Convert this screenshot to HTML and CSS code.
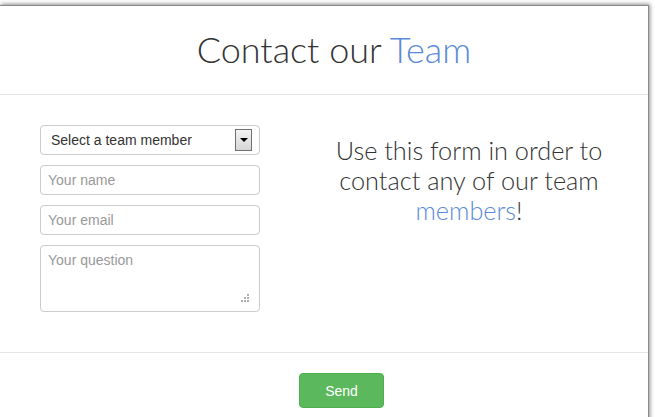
FILE: index.html
```html
<!DOCTYPE html>
<html>
<head>
<meta charset="utf-8">
<link rel="stylesheet" href="styles.css">
</head>
<body>
<div class="window">
  <div class="header">
    <h1 class="title">Contact our <span class="accent">Team</span></h1>
  </div>
  <div class="body">
    <form class="form">
      <div class="select">
        <span class="select-text">Select a team member</span>
        <span class="select-btn"><span class="tri"></span></span>
      </div>
      <input class="field" type="text" placeholder="Your name">
      <input class="field" type="text" placeholder="Your email">
      <div class="area-wrap">
        <textarea class="area" placeholder="Your question"></textarea>
        <svg class="grip" width="9" height="9" viewBox="0 0 9 9">
          <rect x="6" y="0" width="2" height="2" fill="#b0b0b0"/>
          <rect x="3" y="3" width="2" height="2" fill="#b0b0b0"/>
          <rect x="6" y="3" width="2" height="2" fill="#b0b0b0"/>
          <rect x="0" y="6" width="2" height="2" fill="#b0b0b0"/>
          <rect x="3" y="6" width="2" height="2" fill="#b0b0b0"/>
          <rect x="6" y="6" width="2" height="2" fill="#b0b0b0"/>
        </svg>
      </div>
    </form>
    <p class="intro">Use this form in order to contact any of our team <span class="accent">members</span>!</p>
  </div>
  <div class="footer">
    <button class="send" type="button">Send</button>
  </div>
</div>
</body>
</html>
```
FILE: styles.css
```css
html, body {
  margin: 0;
  padding: 0;
  background: #ffffff;
  height: 100%;
  overflow: hidden;
}
body {
  padding-top: 5px;
  box-sizing: border-box;
}
.window {
  width: 648px;
  height: 420px;
  background: #ffffff;
  border-top: 1px solid #8a8a8a;
  border-right: 1px solid #8a8a8a;
  box-shadow: 1px -1px 4px rgba(0, 0, 0, 0.45);
}
.header {
  padding: 23px 0 25px 20px;
  border-bottom: 1px solid #e5e5e5;
  text-align: center;
}
.title {
  margin: 0;
  font-family: Lato, "Liberation Sans", sans-serif;
  font-weight: 300;
  font-size: 36px;
  line-height: 40px;
  color: #333333;
}
.accent {
  color: #5b8ad8;
}
.body {
  display: flex;
  padding: 30px 0 40px 40px;
  border-bottom: 1px solid #e5e5e5;
}
.form {
  width: 220px;
  display: flex;
  flex-direction: column;
  gap: 10px;
  margin: 0;
}
.select {
  height: 30px;
  box-sizing: border-box;
  border: 1px solid #cccccc;
  border-radius: 4px;
  display: flex;
  align-items: center;
  justify-content: space-between;
  padding: 0 7px 0 10px;
  font-family: "Liberation Sans", Arial, sans-serif;
  font-size: 14px;
  color: #333333;
}
.select-btn {
  width: 15px;
  height: 20px;
  border: 1px solid #707070;
  background: linear-gradient(#f4f4f4, #d6d6d6);
  display: flex;
  align-items: center;
  justify-content: center;
}
.tri {
  width: 0;
  height: 0;
  border-left: 4px solid transparent;
  border-right: 4px solid transparent;
  border-top: 4px solid #000000;
}
.field, .area {
  display: block;
  width: 220px;
  box-sizing: border-box;
  border: 1px solid #cccccc;
  border-radius: 4px;
  font-family: "Liberation Sans", Arial, sans-serif;
  font-size: 14px;
  color: #333333;
  margin: 0;
  outline: none;
}
.field {
  height: 30px;
  padding: 0 7px;
}
.field::placeholder, .area::placeholder {
  color: #999999;
  opacity: 1;
}
.area-wrap {
  position: relative;
  height: 67px;
}
.area {
  height: 67px;
  padding: 6px 7px;
  resize: none;
}
.grip {
  position: absolute;
  right: 10px;
  bottom: 9px;
}
.intro {
  flex: 1;
  margin: 10px 0 0 30px;
  font-family: Lato, "Liberation Sans", sans-serif;
  font-weight: 300;
  font-size: 25.3px;
  line-height: 30px;
  color: #333333;
  text-align: center;
  padding: 0 30px;
}
.footer {
  padding: 20px 0 0 299px;
}
.send {
  width: 85px;
  height: 35px;
  background: #5cb85c;
  border: 1px solid #4cae4c;
  border-radius: 4px;
  color: #ffffff;
  font-family: "Liberation Sans", Arial, sans-serif;
  font-size: 14px;
  padding: 0;
}
```
